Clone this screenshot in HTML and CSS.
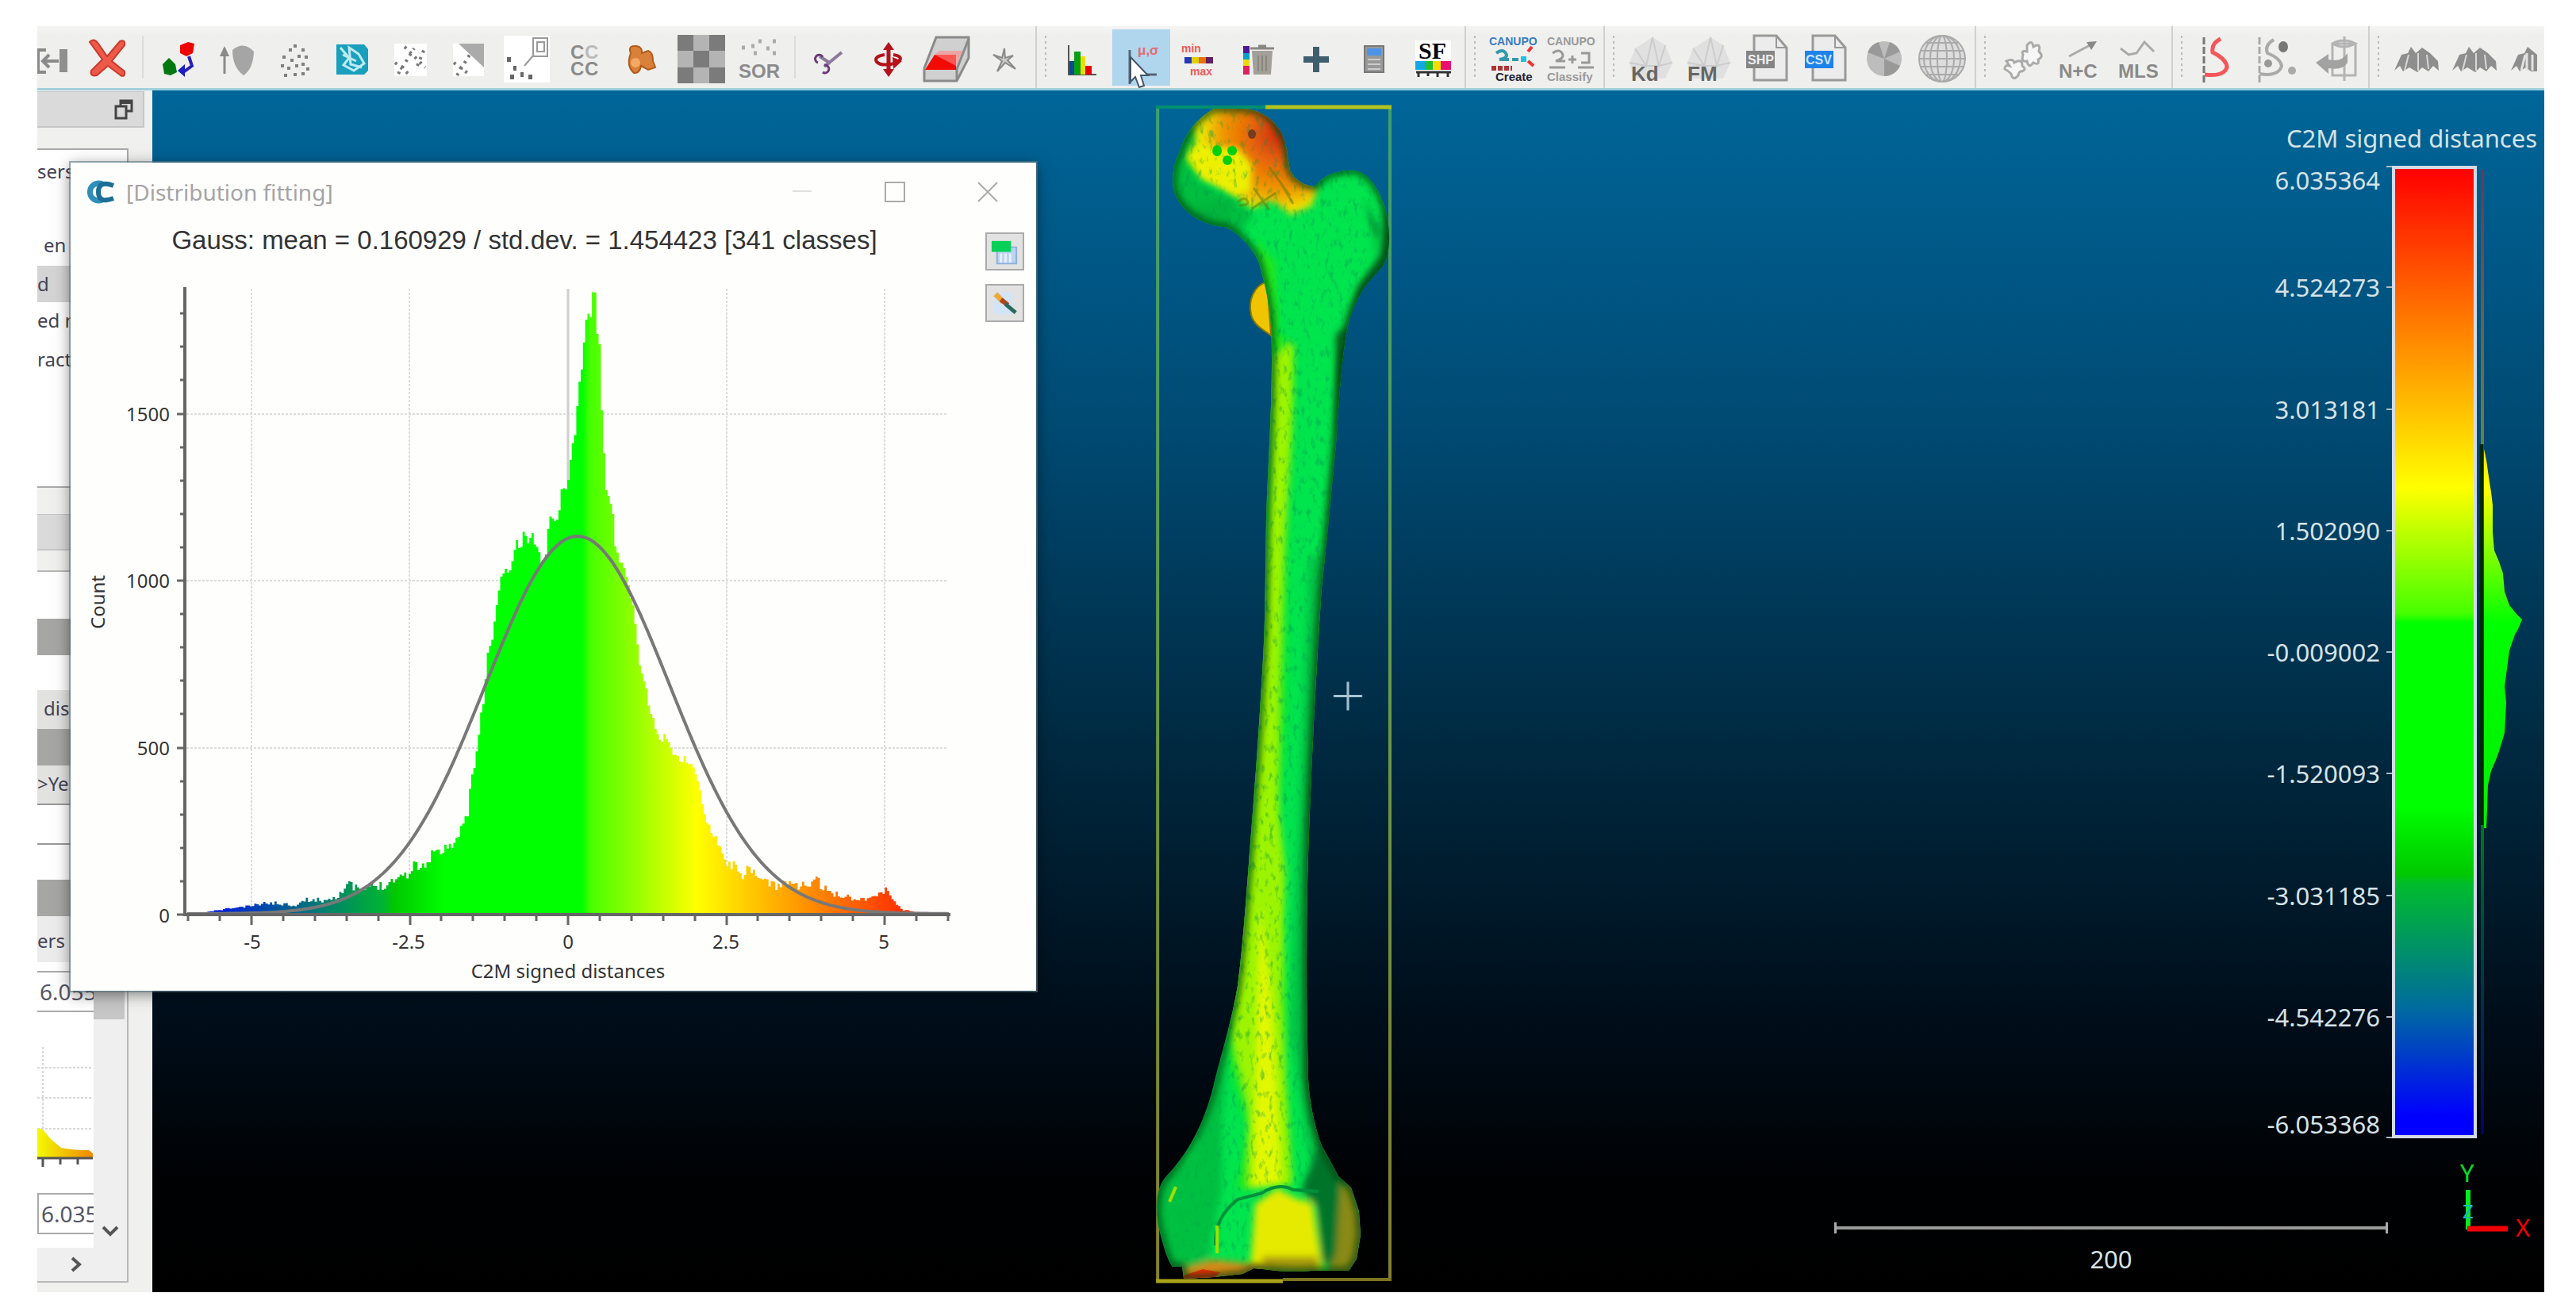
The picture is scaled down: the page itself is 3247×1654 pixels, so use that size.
FILE: index.html
```
<!DOCTYPE html>
<html lang="en">
<head>
<meta charset="utf-8">
<title>Distribution fitting</title>
<link rel="stylesheet" href="styles.css">
</head>
<body>
<main class="app">
  <nav class="toolbar" aria-label="Tools">
    <div class="group group-main">
      <button class="tool cut-left" aria-label="Merge"><svg viewBox="0 0 74 80"><path d="M34 30H24V58H34M30 44H50M38 36L30 44L38 52" fill="none" stroke="#8a8a8a" stroke-width="4"/><path d="M51 29H61V58H51Z" fill="#8f8f8f"/></svg></button>
      <button class="tool" aria-label="Delete"><svg viewBox="0 0 74 80"><path d="M15 20Q20 14 26 22L37 38L53 19Q60 16 59 24L43 44L59 57Q60 65 54 62L38 50L24 62Q15 64 17 56L31 42Z" fill="#ee5a47" stroke="#c93a2e" stroke-width="2"/></svg></button>
      <span class="sep"></span>
      <button class="tool" aria-label="Register"><svg viewBox="0 0 74 80"><path d="M40 24L50 20L58 22L56 34L48 38L40 34Z" fill="#f00000"/><path d="M51 38L55 50L44 58" fill="none" stroke="#2a20b8" stroke-width="4"/><path d="M46 48V64L37 56Z" fill="#1c1cc8"/><path d="M18 48L26 40L34 48L36 58L28 62L20 60Z" fill="#007a10"/></svg></button>
      <button class="tool" aria-label="Normals"><svg viewBox="0 0 74 80"><path d="M22 60V28" stroke="#8a8a8a" stroke-width="3"/><path d="M16 38L22 25L28 38Z" fill="#8a8a8a"/><path d="M32 30Q46 18 59 32Q58 54 46 62Q32 52 32 30Z" fill="#a5a5a5"/></svg></button>
      <button class="tool" aria-label="Sample"><svg viewBox="0 0 74 80"><path d="M22 37h4v4h-4zM30 28h4v4h-4zM36 23h4v4h-4zM46 28h4v4h-4zM50 37h4v4h-4zM41 36h4v4h-4zM32 41h4v4h-4zM20 48h4v4h-4zM28 51h4v4h-4zM38 48h4v4h-4zM46 46h4v4h-4zM52 52h4v4h-4zM24 60h4v4h-4zM36 59h4v4h-4zM46 58h4v4h-4z" fill="#808080"/></svg></button>
      <button class="tool" aria-label="Compute distances"><svg viewBox="0 0 74 80"><path d="M17 23H52L57 29V56L52 61H17Z" fill="#1a9fbd"/><path d="M22 27L33 40L26 49L39 56L52 47L45 35L33 27L35 48L49 52M25 36L42 44" fill="none" stroke="#bdeaf4" stroke-width="3"/></svg></button>
      <button class="tool" aria-label="Cloud to cloud"><svg viewBox="0 0 74 80"><path d="M17 22H58V63H17Z" fill="#fff"/><path d="M18 46L36 61M22 60L42 28M30 26L56 52M46 50L56 26" stroke="#777" stroke-width="4" stroke-dasharray="3 6"/></svg></button>
      <button class="tool" aria-label="Cloud to mesh"><svg viewBox="0 0 74 80"><path d="M17 22H56V63H17Z" fill="#fff"/><path d="M24 22H56V52Z" fill="#aaa"/><path d="M18 46L38 61M22 62L38 36" stroke="#777" stroke-width="4" stroke-dasharray="3 6"/></svg></button>
      <button class="tool" aria-label="Closest point"><svg viewBox="0 0 74 80"><path d="M8 12H66V71H8Z" fill="#fff"/><path d="M45 15H63V38H45ZM50 20H59V32H50ZM34 50L46 36" fill="none" stroke="#999" stroke-width="2"/><path d="M12 39h5v6h-5zM20 50h4v6h-4zM16 61h5v6h-5zM29 58h4v6h-4zM39 61h5v6h-5z" fill="#666"/></svg></button>
      <button class="tool" aria-label="Label components"><svg viewBox="0 0 74 80"><g class="glyph" fill="#8b8b8b" font-size="24"><text x="19" y="41">C</text><text x="37" y="41" fill="#bbb">C</text><text x="19" y="62">C</text><text x="37" y="62">C</text></g></svg></button>
      <button class="tool" aria-label="Segment blob"><svg viewBox="0 0 74 80"><path d="M22 34Q18 24 29 25Q37 26 36 34L44 31Q50 33 50 44L53 52L44 55Q39 52 35 50Q33 60 26 59Q16 50 22 34Z" fill="#d9803a" stroke="#b35a1c" stroke-width="2"/><circle cx="28" cy="46" r="6" fill="#f3a863"/></svg></button>
      <button class="tool" aria-label="Checkerboard"><svg viewBox="0 0 74 80"><path d="M7 11H67V72H7Z" fill="#b4b4b4"/><path d="M7 11H27V31H7ZM47 11H67V31H47ZM27 31H47V52H27ZM7 52H27V72H7ZM47 52H67V72H47Z" fill="#7b7b7b"/></svg></button>
      <button class="tool" aria-label="Outlier removal"><svg viewBox="0 0 74 80"><text class="glyph" x="11" y="65" font-size="24" fill="#8b8b8b">SOR</text><path d="M15 27h4M27 25h4M36 19h4M46 28h4M54 19h4M30 34h4M54 34h4" stroke="#aaa" stroke-width="5"/></svg></button>
      <span class="sep"></span>
      <button class="tool" aria-label="Cut"><svg viewBox="0 0 74 80"><path d="M52 33L30 51M24 38L38 47" stroke="#8b7a9a" stroke-width="4"/><path d="M22 46a5 5 0 1 1 6-7M28 58a5 5 0 1 0 2-9" fill="none" stroke="#6b3a78" stroke-width="3"/></svg></button>
      <button class="tool" aria-label="Translate and rotate"><svg viewBox="0 0 74 80"><path d="M37 26V58" stroke="#b5121b" stroke-width="5"/><path d="M30 30L37 20L44 30ZM30 54L37 64L44 54Z" fill="#b5121b"/><path d="M32 36Q18 38 22 45Q28 51 44 47M43 36Q56 38 50 44" fill="none" stroke="#b5121b" stroke-width="4"/><path d="M42 39L54 44L43 54Z" fill="#b5121b"/></svg></button>
      <button class="tool" aria-label="Cross section"><svg viewBox="0 0 74 80"><path d="M9 53L24 14H65V40L50 69H9Z" fill="#d0d0d0" stroke="#8a8a8a" stroke-width="3"/><path d="M50 69V54L65 16" fill="none" stroke="#8a8a8a" stroke-width="3"/><path d="M10 55L22 36H49V55Z" fill="#f20a05"/><path d="M22 36L28 31H58L49 50Z" fill="#f88" opacity=".6"/></svg></button>
      <button class="tool" aria-label="Trace polyline"><svg viewBox="0 0 74 80"><path d="M37 28L34 40L23 36L34 44L28 57L38 46L51 54L41 43L48 37L38 40Z" fill="#ccc" stroke="#8a8a8a" stroke-width="2"/></svg></button>
    </div>
    <div class="group"><span class="grip"></span>
      <button class="tool" aria-label="Histogram"><svg viewBox="0 0 74 80"><path d="M19 24V61H54" fill="none" stroke="#555" stroke-width="2"/><path d="M20 44H26V61H20Z" fill="#0a4a90"/><path d="M26 32H34V61H26Z" fill="#06a015"/><path d="M34 38H40V61H34Z" fill="#e8e000"/><path d="M40 50H48V61H40Z" fill="#e80000"/></svg></button>
      <button class="tool active" aria-label="Fit distribution"><svg viewBox="0 0 74 80"><path d="M22 30V73M40 61H56" stroke="#567" stroke-width="3" fill="none"/><text class="glyph" x="32" y="36" font-size="17" fill="#e36a72">μ,σ</text><path d="M23 39V70L29 64L34 77L40 75L36 62H45Z" fill="#fff" stroke="#456" stroke-width="2"/></svg></button>
      <button class="tool" aria-label="Scalar range"><svg viewBox="0 0 74 80"><text class="glyph" x="14" y="33" font-size="14" fill="#ee5a5a">min</text><text class="glyph" x="25" y="62" font-size="14" fill="#ee5a5a">max</text><path d="M18 39h9v8h-9z" fill="#2538b8"/><path d="M27 39h9v8h-9z" fill="#e0d000"/><path d="M36 39h9v8h-9z" fill="#e87000"/><path d="M45 39h9v8h-9z" fill="#602060"/></svg></button>
      <button class="tool" aria-label="Delete scalar field"><svg viewBox="0 0 74 80"><path d="M18 25h8v9h-8z" fill="#50189a"/><path d="M18 34h8v8h-8z" fill="#08a0c8"/><path d="M18 42h8v8h-8z" fill="#eed800"/><path d="M18 50h8v11h-8z" fill="#e02060"/><path d="M29 31H55L53 61H31Z" fill="#a3a09a"/><path d="M27 28h30M37 25h10" stroke="#8a8782" stroke-width="3"/><path d="M37 37V57M42 37V57M47 37V57" stroke="#8a8782" stroke-width="2"/></svg></button>
      <button class="tool" aria-label="Add scalar field"><svg viewBox="0 0 74 80"><path d="M37 26V58M21 42H53" stroke="#3f5f6e" stroke-width="8"/></svg></button>
      <button class="tool" aria-label="Scalar calculator"><svg viewBox="0 0 74 80"><path d="M25 25H49V58H25Z" fill="#999" stroke="#777" stroke-width="2"/><path d="M28 28H46V37H28Z" fill="#4d94e8"/><path d="M29 42h16M29 48h16M29 54h16" stroke="#ccc" stroke-width="2"/></svg></button>
      <button class="tool" aria-label="Scalar field as coordinate"><svg viewBox="0 0 74 80"><path d="M15 18H60V64H15Z" fill="#fff"/><text class="glyph-serif" x="19" y="41" font-size="30">SF</text><path d="M15 44h12v11H15z" fill="#10a8e0"/><path d="M27 44h10v11H27z" fill="#20c030"/><path d="M37 44h10v11H37z" fill="#f4dc00"/><path d="M47 44h13v11H47z" fill="#e81070"/><path d="M16 58H60M19 58v6M31 58v5M43 58v6M56 58v6" stroke="#333" stroke-width="3"/></svg></button>
    </div>
    <div class="group"><span class="grip"></span>
      <button class="tool" aria-label="Canupo create"><svg viewBox="0 0 74 80"><text class="glyph" x="7" y="24" font-size="14" fill="#3a7cc4">CANUPO</text><path d="M16 34q8-6 12 0t-8 8h12M36 42h8" fill="none" stroke="#39a" stroke-width="4"/><path d="M47 38h7v7h-7z" fill="#1cc0e0"/><path d="M56 32l5-6M56 44l7 6" stroke="#e33" stroke-width="4"/><path d="M10 53h26" stroke="#a33" stroke-width="6" stroke-dasharray="6 2"/><text class="glyph" x="15" y="69" font-size="15" fill="#223">Create</text></svg></button>
      <button class="tool" aria-label="Canupo classify"><svg viewBox="0 0 74 80"><g fill="#999"><text class="glyph" x="7" y="24" font-size="14">CANUPO</text><text class="glyph" x="7" y="69" font-size="15">Classify</text></g><path d="M14 34q8-6 12 0t-8 10h12M10 52h20M34 42h10M39 37v10M50 34h10v12H50M46 52h20" fill="none" stroke="#999" stroke-width="3"/></svg></button>
    </div>
    <div class="group"><span class="grip"></span>
      <button class="tool" aria-label="Kd-tree facets"><svg viewBox="0 0 74 80"><path d="M9 46L16 28L38 14L54 24L63 46L54 66H14Z" fill="#e0e0e0"/><path d="M16 28L30 50L38 14L46 50L54 24M9 46L30 50L46 50L63 46" fill="none" stroke="#ccc" stroke-width="2"/><text class="glyph" x="11" y="69" font-size="26" fill="#666">Kd</text></svg></button>
      <button class="tool" aria-label="Fast marching facets"><svg viewBox="0 0 74 80"><path d="M9 46L16 28L38 14L54 24L63 46L54 66H14Z" fill="#e0e0e0"/><path d="M16 28L30 50L38 14L46 50L54 24M9 46L30 50L46 50L63 46" fill="none" stroke="#ccc" stroke-width="2"/><text class="glyph" x="9" y="69" font-size="26" fill="#666">FM</text></svg></button>
      <button class="tool" aria-label="Export SHP"><svg viewBox="0 0 74 80"><path d="M20 12H48L61 27V68H20Z" fill="#ececec" stroke="#999" stroke-width="3"/><path d="M48 12V27H61" fill="none" stroke="#999" stroke-width="2"/><path d="M10 31H46V53H10Z" fill="#858585"/><text class="glyph" x="12" y="48" font-size="16" fill="#eee">SHP</text></svg></button>
      <button class="tool" aria-label="Export CSV"><svg viewBox="0 0 74 80"><path d="M20 12H48L61 27V68H20Z" fill="#ececec" stroke="#999" stroke-width="3"/><path d="M48 12V27H61" fill="none" stroke="#999" stroke-width="2"/><path d="M10 31H46V53H10Z" fill="#1d83e8"/><text class="glyph" x="11" y="48" font-size="16" fill="#cfe6ff">CSV</text></svg></button>
      <button class="tool" aria-label="Classify facets"><svg viewBox="0 0 74 80"><circle cx="37" cy="41" r="22" fill="#bdbdbd"/><path d="M37 41L16 33A22 22 0 0 1 30 20ZM37 41V63A22 22 0 0 0 57 50ZM37 41L44 20A22 22 0 0 1 57 32Z" fill="#999"/></svg></button>
      <button class="tool" aria-label="Stereogram"><svg viewBox="0 0 74 80"><g fill="none" stroke="#aaa" stroke-width="2"><circle cx="37" cy="41" r="29" fill="#ddd"/><ellipse cx="37" cy="41" rx="23" ry="29"/><ellipse cx="37" cy="41" rx="15" ry="29"/><ellipse cx="37" cy="41" rx="6" ry="29"/><path d="M8 41H66M10 31H64M10 51H64M17 21H57M17 61H57"/></g></svg></button>
    </div>
    <div class="group"><span class="grip"></span>
      <button class="tool" aria-label="Puzzle"><svg viewBox="0 0 74 80"><path d="M42 24Q48 16 50 26Q60 20 57 32Q64 38 56 42Q58 50 50 46Q44 54 42 44Q34 46 37 36Q34 30 42 32ZM16 44Q24 40 26 46Q36 40 36 50Q42 54 36 57Q32 56 31 62Q24 70 22 60Q18 56 14 54Q14 48 20 50Z" fill="#f6f6f6" stroke="#aaa" stroke-width="3"/></svg></button>
      <button class="tool" aria-label="Normals and curvature"><svg viewBox="0 0 74 80"><text class="glyph" x="9" y="65" font-size="24" fill="#8a8a8a">N+C</text><path d="M22 38L52 22" stroke="#aaa" stroke-width="3"/><path d="M44 20L57 19L50 30Z" fill="#8a8a8a"/></svg></button>
      <button class="tool" aria-label="Moving least squares"><svg viewBox="0 0 74 80"><text class="glyph" x="11" y="65" font-size="24" fill="#8a8a8a">MLS</text><path d="M14 28L24 36L34 34L44 20L56 32" fill="none" stroke="#aaa" stroke-width="3"/></svg></button>
    </div>
    <div class="group"><span class="grip"></span>
      <button class="tool" aria-label="Extract profile"><svg viewBox="0 0 74 80"><path d="M17 14V71" stroke="#777" stroke-width="3" stroke-dasharray="9 3"/><path d="M38 16Q26 22 28 33Q46 42 46 52Q42 64 18 61" fill="none" stroke="#f4575a" stroke-width="5"/></svg></button>
      <button class="tool" aria-label="Distance to profile"><svg viewBox="0 0 74 80"><path d="M14 14V71" stroke="#aaa" stroke-width="3" stroke-dasharray="9 3"/><path d="M32 17Q20 24 24 34Q40 40 42 50Q38 64 14 60" fill="none" stroke="#aaa" stroke-width="4"/><ellipse cx="44" cy="26" rx="6" ry="7" fill="#777"/><circle cx="25" cy="47" r="5" fill="#999"/><circle cx="55" cy="56" r="5" fill="#aaa"/></svg></button>
      <button class="tool" aria-label="Unroll"><svg viewBox="0 0 74 80"><path d="M33 22H62V62H33ZM33 22Q47 14 62 22Q47 30 33 22M48 13V69" fill="none" stroke="#b4b4b4" stroke-width="3"/><path d="M12 46L28 35V42Q44 46 52 34V46Q46 56 28 53V60Z" fill="#a2a2a2"/></svg></button>
    </div>
    <div class="group group-last"><span class="grip"></span>
      <button class="tool" aria-label="Waveform"><svg viewBox="0 0 74 80"><path d="M9 56L18 36L26 34L30 26L36 34L44 27L54 34L64 44L65 56L58 50L52 57L44 52L38 58L28 52L20 57L16 50Z" fill="#8e8e8e"/><path d="M22 56L27 36M39 56V34M52 54L50 36" stroke="#d8d8d8" stroke-width="2"/></svg></button>
      <button class="tool" aria-label="Waveform region"><svg viewBox="0 0 74 80"><path d="M9 56L18 36L26 34L30 26L36 34L44 27L54 34L64 44L65 56L58 50L52 57L44 52L38 58L28 52L20 57L16 50Z" fill="#8e8e8e"/><path d="M22 56L27 36M39 56V34M52 54L50 36" stroke="#d8d8d8" stroke-width="2"/></svg></button>
      <button class="tool cut-right" aria-label="Waveform slice"><svg viewBox="0 0 74 80"><path d="M9 56L18 36L26 34L30 26L42 36V57H34L28 52L20 57L16 50Z" fill="#8e8e8e"/><path d="M22 56L27 36M29 56V34M36 56V36" stroke="#e2e2e2" stroke-width="3"/></svg></button>
    </div>
  </nav>

  <div class="workspace">
    <aside class="side">
      <header class="side-head"><svg viewBox="0 0 24 26"><path d="M8 8V2H22V15H16M2 9H15V24H2Z" fill="none" stroke="#444" stroke-width="3"/><path d="M8 2H22V6H8Z" fill="#444"/></svg></header>
      <div class="tree">
        <p class="tree-row row-first">sers</p>
        <p class="tree-row in">en</p>
        <p class="tree-row picked">d</p>
        <p class="tree-row">ed n</p>
        <p class="tree-row">ract</p>
      </div>
      <div class="side-head second"></div>
      <div class="props">
        <div class="props-body">
          <div class="cell tall"></div>
          <div class="cell dark"></div>
          <div class="cell"></div>
          <div class="cell light in">dis</div>
          <div class="cell dark"></div>
          <div class="cell light lined">&gt;Ye</div>
          <div class="cell lined"></div>
          <div class="cell"></div>
          <div class="cell dark"></div>
          <div class="cell light wide">ers</div>
          <input class="num" aria-label="Minimum" value="6.055368">
          <svg class="mini" viewBox="47 1276 71 228"><path d="M47 1346H117M47 1384H117M47 1423H117M54 1320V1460" stroke="#d8d8d8" stroke-width="2" stroke-dasharray="3 2"/><path d="M47 1422L54 1424L64 1436L77 1447L90 1449L102 1450L112 1450L117 1454V1460H47Z" fill="url(#miniRamp)"/><path d="M47 1460H117M54 1460V1471M76 1460V1468M98 1460V1468" stroke="#555" stroke-width="3"/><defs><linearGradient id="miniRamp"><stop offset="0" stop-color="#f4fa00"/><stop offset="1" stop-color="#f08800"/></linearGradient></defs></svg>
          <input class="num num-left" aria-label="Maximum" value="6.035364">
        </div>
        <div class="vbar"><i></i><svg viewBox="0 0 22 14"><path d="M2 2L11 11L20 2" fill="none" stroke="#555" stroke-width="4"/></svg></div>
        <div class="hbar"><svg viewBox="0 0 14 20"><path d="M2 2L11 10L2 18" fill="none" stroke="#555" stroke-width="4"/></svg></div>
      </div>
    </aside>

    <section class="view" aria-label="3D view">
      <svg class="scene" viewBox="192 113 3015 1516">
        <defs>
          <linearGradient id="boxSide" x1="0" y1="134" x2="0" y2="1614" gradientUnits="userSpaceOnUse"><stop offset="0" stop-color="#3fa06e"/><stop offset=".5" stop-color="#6a9a48"/><stop offset="1" stop-color="#85802c"/></linearGradient>
          <radialGradient id="head" cx="1612" cy="168" r="120" gradientUnits="userSpaceOnUse"><stop offset="0" stop-color="#d02a08"/><stop offset=".3" stop-color="#e86408"/><stop offset=".6" stop-color="#f09800"/><stop offset=".85" stop-color="#eef000"/><stop offset="1" stop-color="#8ae800"/></radialGradient>
          <clipPath id="boneClip"><path id="bone" d="M1530 136C1508 148 1492 170 1487 190C1476 210 1475 236 1484 250C1494 270 1520 284 1543 285C1560 290 1582 316 1587 331C1594 356 1600 380 1602 410C1605 470 1600 560 1597 620C1594 690 1596 760 1592 828C1588 900 1584 960 1578 1035C1572 1110 1568 1180 1560 1242C1552 1290 1536 1340 1530 1367C1517 1420 1496 1455 1470 1483C1455 1500 1456 1530 1461 1550C1466 1570 1472 1590 1478 1597L1490 1597L1492 1612L1530 1610L1566 1606L1580 1599C1600 1600 1615 1605 1653 1602L1700 1602L1710 1587L1715 1557L1713 1527L1703 1497L1687 1483C1676 1462 1668 1448 1667 1447C1656 1418 1650 1385 1649 1360C1646 1240 1646 1120 1652 1000C1656 900 1662 800 1666 740C1672 690 1680 600 1684 560C1688 500 1692 440 1700 406C1706 385 1715 370 1717 366C1730 346 1744 338 1748 324C1754 300 1750 282 1748 270C1742 240 1725 216 1708 214C1690 213 1668 218 1658 234C1645 234 1632 226 1626 214C1622 190 1622 178 1613 163C1600 142 1580 136 1562 136Z"/></clipPath>
          <filter id="grain" x="0" y="0" width="1" height="1"><feTurbulence type="fractalNoise" baseFrequency=".17 .08" numOctaves="3" seed="7"/><feColorMatrix values="0 0 0 0 0  0 0 0 0 .3  0 0 0 0 .08  4 0 0 0 -2.2"/></filter>
          <filter id="soft"><feGaussianBlur stdDeviation="4"/></filter>
        </defs>
        <path d="M1459 134V1614M1752 134V1614" stroke="url(#boxSide)" stroke-width="4"/>
        <path d="M1457 134H1595" stroke="#009070" stroke-width="4"/><path d="M1595 134H1754" stroke="#b4c41c" stroke-width="5"/>
        <path d="M1457 1615H1617" stroke="#aaa41a" stroke-width="5"/><path d="M1617 1613H1754" stroke="#7c7420" stroke-width="4"/>
        <path d="M1597 354C1580 360 1573 378 1577 396C1580 408 1590 414 1602 422Z" fill="#f0c400" stroke="#8a7a00" stroke-width="2"/>
        <g clip-path="url(#boneClip)">
          <rect x="1450" y="130" width="310" height="1490" fill="#00e44e"/>
          <g filter="url(#soft)">
            <path d="M1583 300L1607 330L1612 420L1632 436L1630 520L1622 700L1620 900L1612 1040L1622 1240L1622 1360L1630 1490L1560 1500L1572 1420L1550 1340L1546 1280L1575 1040L1590 800L1600 600L1598 440Z" fill="#20e81c"/>
            <path d="M1606 450L1630 430L1628 540L1618 680L1612 860L1610 1000L1620 1100L1614 1260L1622 1400L1628 1494L1573 1498L1575 1400L1554 1310L1560 1240L1580 1040L1596 760Z" fill="#9cf400"/>
            <path d="M1588 1140L1602 1260L1610 1400L1614 1490L1580 1498L1582 1400Z" fill="#e2f800"/>
            <path d="M1668 700L1650 700L1636 1040L1626 1300L1650 1460L1690 1500L1670 1360Z" fill="#00c245"/>
            <path d="M1684 420L1684 560L1666 760L1650 1000L1646 1360L1662 1440L1700 1510L1660 1180L1700 560L1720 400Z" fill="#00601f"/>
            <path d="M1748 250L1740 320L1712 360L1690 440L1730 440L1770 340Z" fill="#007228"/>
            <path d="M1720 250L1734 300L1730 330L1738 290Z" fill="#006a20"/>
            <path d="M1470 480L1555 250L1490 260Z" fill="#00b040"/>
          </g>
          <g filter="url(#soft)"><path d="M1496 180Q1500 120 1560 126L1620 120L1628 214L1660 236L1654 258L1628 270L1604 252L1576 262L1552 240L1516 222L1492 204Z" fill="url(#head)"/></g>
          <path d="M1494 194L1508 184L1560 186L1578 206L1576 240L1556 246L1532 232L1514 224Z" fill="#ecf000" filter="url(#soft)"/>
          <path d="M1476 180L1500 150L1508 176L1492 196L1512 228L1558 252L1580 270L1560 296L1480 276Z" fill="#00b83c" opacity=".85" filter="url(#soft)"/>
          <rect x="1450" y="130" width="310" height="1490" filter="url(#grain)" opacity=".42"/>
          <g fill="#00d010"><ellipse cx="1534" cy="189" rx="6" ry="7"/><ellipse cx="1553" cy="189" rx="6" ry="6"/><ellipse cx="1547" cy="201" rx="6" ry="6"/></g>
          <g filter="url(#soft)">
            <path d="M1450 1490L1500 1460L1530 1370L1550 1300L1540 1410L1540 1500L1520 1600L1470 1610Z" fill="#00b03c" opacity=".7"/>
            <path d="M1664 1440L1690 1480L1684 1600L1666 1590L1660 1520L1640 1500Z" fill="#00742c"/>
            <path d="M1582 1518L1610 1498L1636 1512L1654 1516L1662 1570L1668 1604L1600 1606L1576 1596Z" fill="#e6ea00"/>
            <path d="M1690 1490L1706 1496L1722 1550L1710 1610L1672 1606L1684 1580Z" fill="#8a8a14"/>
            <path d="M1590 1584L1660 1584L1664 1606H1596Z" fill="#a89a08"/>
            <path d="M1490 1600L1530 1588L1600 1596L1580 1612L1490 1618Z" fill="#d88a18"/>
          </g>
          <path d="M1492 1608L1516 1600L1538 1604L1528 1614H1492Z" fill="#f02c08"/>
          <path d="M1532 1570Q1530 1535 1560 1512L1590 1504Q1612 1490 1630 1500L1662 1502" fill="none" stroke="#00903a" stroke-width="4"/>
          <path d="M1534 1545V1580M1474 1515L1482 1496" stroke="#a4e000" stroke-width="4"/>
          <path d="M1560 254q8-8 12-2t-10 6M1578 262l30-20M1580 236l20 28M1612 226l18 30M1600 210l26 36" fill="none" stroke="#5e7a00" stroke-width="3" opacity=".5"/>
          <ellipse cx="1578" cy="168" rx="5" ry="6" fill="#7a3a20"/>
          <use href="#bone" fill="none" stroke="#003a10" stroke-width="9" opacity=".75" filter="url(#soft)"/>
        </g>
        <path d="M1681 877H1717M1699 859V895" stroke="#a9c6d4" stroke-width="3"/>
      </svg>

      <div class="legend">
        <h2>C2M signed distances</h2>
        <div class="legend-body">
          <ol class="ticks"><li>6.035364</li><li>4.524273</li><li>3.013181</li><li>1.502090</li><li>-0.009002</li><li>-1.520093</li><li>-3.031185</li><li>-4.542276</li><li>-6.053368</li></ol>
          <div class="ramp"></div>
          <svg class="density" viewBox="3122 209 58 1226"><defs><linearGradient id="vramp" x1="0" y1="212" x2="0" y2="1432" gradientUnits="userSpaceOnUse"><stop offset="0" stop-color="#f00"/><stop offset=".33" stop-color="#ff0"/><stop offset=".47" stop-color="#0f0"/><stop offset=".7" stop-color="#0e0"/><stop offset=".75" stop-color="#00b432"/><stop offset="1" stop-color="#00f"/></linearGradient></defs>
            <path d="M3129 214V1430" stroke="url(#vramp)" stroke-width="4" opacity=".4"/><path d="M3128 560V1040" stroke="#02280c" stroke-width="5"/>
            <path d="M3131 566L3134 580L3138 608L3140 620L3142 637L3142 671L3144 694L3150 708L3155 723L3157 746L3163 763L3172 774L3179 781L3174 793L3170 800L3163 820L3160 843L3157 866L3159 885L3158 905L3157 924L3150 947L3146 958L3140 972L3136 990L3135 1020L3134 1044H3131Z" fill="url(#vramp)"/></svg>
        </div>
        <div class="legend-foot">
          <div class="scale"><span class="scale-line"></span><span>200</span></div>
          <svg class="triad" viewBox="3090 1454 108 120"><g class="axis-text" font-size="31"><text x="3101" y="1490" fill="#00e020">Y</text><text x="3171" y="1559" fill="#f00000">X</text></g><path d="M3111 1500V1550" stroke="#00ee20" stroke-width="6"/><path d="M3110 1549H3161" stroke="#ee0000" stroke-width="7"/><text class="axis-text" x="3104" y="1536" font-size="24" fill="#16b6c8">Z</text></svg>
        </div>
      </div>
    </section>
  </div>

  <section class="dialog" role="dialog" aria-label="Distribution fitting">
    <header class="titlebar">
      <svg class="logo" viewBox="0 0 38 34"><path d="M21 7A11 11 0 1 0 21 27" fill="none" stroke="#2f8fb8" stroke-width="7"/><path d="M35 9Q16 2 16 17T35 25" fill="none" stroke="#1b6f96" stroke-width="6"/></svg>
      <h1>[Distribution fitting]</h1>
      <button class="win" aria-label="Minimize"><svg viewBox="0 0 28 28"><path d="M2 13H26" stroke="#e0e0e0" stroke-width="2"/></svg></button>
      <button class="win" aria-label="Maximize"><svg viewBox="0 0 28 28"><path d="M2 2H26V26H2Z" fill="none" stroke="#aaa" stroke-width="2"/></svg></button>
      <button class="win" aria-label="Close"><svg viewBox="0 0 28 28"><path d="M2 2L26 26M26 2L2 26" stroke="#aaa" stroke-width="2"/></svg></button>
    </header>
    <div class="dialog-body">
      <div class="plot">
        <h2>Gauss: mean = 0.160929 / std.dev. = 1.454423 [341 classes]</h2>
        <svg viewBox="89 325 1136 924">
          <defs><linearGradient id="ramp" x1="232" y1="0" x2="1197" y2="0" gradientUnits="userSpaceOnUse"><stop offset="0" stop-color="#00f"/><stop offset=".26" stop-color="#00b432"/><stop offset=".275" stop-color="#00c800"/><stop offset=".34" stop-color="#0f0"/><stop offset=".52" stop-color="#0f0"/><stop offset=".53" stop-color="#46ff00"/><stop offset=".67" stop-color="#ff0"/><stop offset="1" stop-color="#f00"/></linearGradient></defs>
          <path d="M317 364V1150M516 364V1150M916 364V1150M1115 364V1150M235 522H1195M235 732H1195M235 943H1195" stroke="#dcdcdc" stroke-width="2" stroke-dasharray="3 2"/>
          <path d="M716 364V1150" stroke="#cfcfcf" stroke-width="3"/>
          <path id="bars" fill="url(#ramp)"/>
          <path id="curve" fill="none" stroke="#787878" stroke-width="4"/>
          <path d="M233 362V1153H1198" fill="none" stroke="#666" stroke-width="4"/>
          <path id="axis-ticks" stroke="#666" stroke-width="3"/>
          <g class="plot-text">
            <g text-anchor="end"><text x="214" y="531">1500</text><text x="214" y="741">1000</text><text x="214" y="952">500</text><text x="214" y="1163">0</text></g>
            <g text-anchor="middle"><text x="318" y="1196">-5</text><text x="515" y="1196">-2.5</text><text x="716" y="1196">0</text><text x="915" y="1196">2.5</text><text x="1114" y="1196">5</text><text x="716" y="1233">C2M signed distances</text><text transform="translate(132 759) rotate(-90)">Count</text></g>
          </g>
        </svg>
      </div>
      <div class="plot-tools">
        <button aria-label="Export to CSV"><svg viewBox="0 0 44 44"><path d="M12 16H37V37H12Z" fill="#bcd4f0" stroke="#8fb0d8" stroke-width="2"/><path d="M17 24V36M23 24V36M29 24V36" stroke="#e6effa" stroke-width="3"/><path d="M5 8H30V22H5Z" fill="#08cf58"/></svg></button>
        <button aria-label="Export to image"><svg viewBox="0 0 44 44"><path d="M8 8H32V36H8Z" fill="#d3e4f6"/><path d="M10 10L20 20" stroke="#f0a838" stroke-width="7"/><path d="M17 17L26 24" stroke="#a84820" stroke-width="6"/><path d="M23 23L36 34" stroke="#2a6a5a" stroke-width="5"/></svg></button>
      </div>
    </div>
  </section>
</main>
<script src="chart.js"></script>
</body>
</html>
```

FILE: styles.css
```
* { box-sizing: border-box; }
html, body { margin: 0; background: #fff; }
body { min-height: 100vh; display: flex; flex-direction: column; padding: 33px 40px 25px 47px; font-family: "Noto Sans", "Open Sans", sans-serif; }
h1, h2, p, ol { margin: 0; padding: 0; font-size: inherit; font-weight: 400; list-style: none; }
button { border: 0; padding: 0; background: none; font: inherit; }
svg { display: block; }

.app { position: relative; flex: 1; display: flex; flex-direction: column; overflow: hidden; background: #f0f0ef; }

/* toolbar */
.toolbar { display: flex; height: 81px; border-bottom: 3px solid #9fd0dc; background: linear-gradient(#f4f4f3, #efefed 12px); }
.group { display: flex; align-items: stretch; flex: 3 1 28px; min-width: 0; border-left: 2px solid #d0d0d0; padding: 0 4px 0 10px; }
.group:nth-child(2) { flex-grow: 7; }
.group:nth-child(3) { flex-grow: 2; }
.group:nth-child(4) { flex-grow: 6; }
.group-main { flex: 16.7 1 33px; border-left: 0; padding: 0 2px 0 0; }
.group-last { flex: 2.7 1 24px; padding-right: 0; }
.grip { flex: none; width: 2px; margin: 12px 10px 10px 0; background: repeating-linear-gradient(#bbb 0 3px, transparent 3px 7px); }
.sep { flex: none; width: 2px; margin: 12px 7px; background: #dcdcdc; }
.tool { flex: 1 1 0; min-width: 0; display: flex; justify-content: center; overflow: hidden; }
.tool svg { flex: none; width: 74px; height: 80px; }
.cut-left { flex-grow: .7; justify-content: flex-end; }
.cut-right { flex-grow: .7; justify-content: flex-start; }
.active { background: linear-gradient(transparent 4px, #b0d6ee 4px 75px, transparent 75px); }
.glyph { font-family: "Liberation Sans", sans-serif; font-weight: 700; }
.glyph-serif { font-family: "Liberation Serif", serif; font-weight: 700; }

.workspace { flex: 1; display: grid; grid-template-columns: 145px 1fr; }

/* left panel */
.side { display: flex; flex-direction: column; min-width: 0; padding: 1px 0 12px; overflow: hidden; font-size: 28px; color: #445; }
.side-head { flex: none; display: flex; justify-content: flex-end; align-items: center; width: 135px; height: 46px; padding-right: 12px; background: #dadada; border: solid #c6c6c6; border-width: 1px 2px 2px 0; }
.side-head svg { width: 24px; height: 26px; }
.tree { width: 115px; height: 428px; margin-top: 26px; padding-top: 4px; background: #fff; border: solid #aaa; border-width: 2px 2px 2px 0; overflow: hidden; font-size: 24px; }
.tree-row { height: 49px; line-height: 46px; white-space: nowrap; }
.tree-row.row-first { height: 93px; }
.tree-row.in, .cell.in { padding-left: 8px; }
.tree-row.picked { height: 46px; background: #d4d4d4; }
.second { margin-top: 33px; }
.props { flex: 1; width: 115px; margin-top: 25px; display: grid; grid-template: 1fr 42px / 71px 1fr; border: solid #b8b8b8; border-width: 2px 2px 2px 0; min-height: 0; overflow: hidden; }
.props-body { display: flex; flex-direction: column; background: #fff; overflow: hidden; }
.cell { flex: none; height: 44px; line-height: 46px; white-space: nowrap; font-size: 24px; }
.cell.tall { height: 59px; }
.cell.dark { height: 46px; background: #a6a6a5; }
.cell.light { height: 49px; background: #e2e2e1; }
.cell.lined { height: 50px; border-bottom: 2px solid #999; }
.cell.wide { height: 58px; line-height: 62px; background: #ececec; margin-bottom: 11px; }
.num { flex: none; width: 150px; height: 52px; border: solid #aaa; border-width: 2px 0; padding: 0 3px; font: inherit; color: #556; background: #fff; }
.num-left { border-left-width: 2px; }
.mini { flex: none; width: 71px; height: 228px; }
.vbar { display: flex; flex-direction: column; align-items: center; justify-content: space-between; padding-bottom: 14px; background: #efefef; }
.vbar i { align-self: stretch; height: 564px; background: #c6c6c6; margin-right: 3px; }
.vbar svg { width: 22px; height: 14px; }
.hbar { grid-column: 1 / 3; display: flex; align-items: center; padding-left: 42px; background: #efefef; }
.hbar svg { width: 14px; height: 20px; }

/* 3D view */
.view { position: relative; display: flex; justify-content: flex-end; color: #d6e2e8; font-size: 31px; line-height: 36px; background: linear-gradient(#006699, #004a73 28%, #003f62 37%, #00253a 58%, #000f1c 76%, #000103 91%, #000); }
.scene { position: absolute; inset: 0; width: 100%; height: 100%; }
.legend { position: relative; display: flex; flex-direction: column; align-items: flex-end; padding: 42px 9px 55px 0; }
.legend-body { flex: 1; display: flex; margin: 17px 18px 0 0; }
.ticks { display: grid; grid-template-rows: 1fr repeat(7, 2fr) 1fr; }
.ticks li { display: flex; align-items: center; justify-content: flex-end; gap: 8px; }
.ticks li::after { content: ""; width: 7px; height: 2px; background: #a9bcc6; }
.ticks li:first-child { align-items: flex-start; }
.ticks li:last-child { align-items: flex-end; }
.ramp { width: 107px; border: 4px solid #d3dbe6; background: linear-gradient(#f00, #ff0 33%, #46ff00 46%, #0f0 47% 66%, #00c800 73%, #00bc2c 74%, #006aa0 87%, #00f 98%); }
.density { width: 58px; }
.legend-foot { display: flex; align-items: flex-start; margin-top: 19px; height: 120px; }
.scale { display: flex; flex-direction: column; align-items: center; gap: 14px; width: 698px; margin: 87px 80px 0 0; }
.scale-line { align-self: stretch; height: 14px; border: solid #aaa; border-width: 0 3px; background: linear-gradient(transparent 5px, #9a9a9a 5px 9px, transparent 9px); }
.triad { width: 108px; height: 120px; }
.axis-text { font-family: "Noto Sans", sans-serif; }

/* floating dialog */
.dialog { position: absolute; left: 42px; top: 172px; width: 1217px; background: #fefefd; box-shadow: 0 0 0 2px rgba(90, 120, 130, .6), 0 4px 18px rgba(0, 0, 0, .5); }
.titlebar { display: flex; align-items: center; height: 74px; padding: 0 47px 0 19px; color: #a4a4a4; }
.titlebar h1 { flex: 1; margin-left: 13px; font-size: 28px; }
.logo { width: 38px; height: 34px; }
.win { margin-left: 89px; }
.win svg { width: 28px; height: 28px; }
.dialog-body { display: flex; }
.plot { flex: 1; }
.plot h2 { height: 46px; padding-left: 8px; text-align: center; font: 33px/48px "Liberation Sans", Arial, sans-serif; color: #333; }
.plot svg { width: 100%; }
.plot-text { font-size: 24px; fill: #333; }
.plot-tools { flex: none; display: flex; flex-direction: column; gap: 17px; width: 81px; padding: 14px 15px 0 17px; }
.plot-tools button { height: 48px; padding: 0 1px; border: 2px solid #aaa; background: #e2e2e2; }
```

FILE: chart.js
```
// Envelope of the 341-class histogram, as x,y pairs in plot units.
const envelope = [236,1152,252,1151,270,1148,290,1145,310,1143,337,1138,360,1140,370,1141,387,1134,405,1135,421,1131,438,1116,448,1120,459,1122,470,1116,480,1117,497,1107,515,1101,519,1090,530,1092,539,1088,543,1072,552,1076,560,1068,577,1061,581,1041,589,1024,592,985,594,974,599,952,604,909,610,874,612,831,619,809,623,774,627,752,631,724,640,720,647,701,648,682,656,691,660,668,665,689,670,672,676,692,681,709,688,694,691,652,698,660,705,637,706,616,714,617,718,576,723,555,725,519,731,473,735,430,736,402,743,401,745,362,749,364,752,430,756,442,757,512,760,569,763,612,767,626,772,655,774,687,782,709,787,726,791,731,800,788,806,841,815,877,821,906,829,931,842,931,850,956,867,959,875,973,884,1013,892,1038,905,1063,916,1090,930,1093,934,1104,940,1097,955,1106,976,1118,985,1112,1005,1116,1023,1116,1029,1108,1035,1120,1052,1127,1082,1134,1103,1129,1117,1122,1128,1138,1136,1147,1162,1151,1197,1152];
const base = 1152, left = 236, width = 961, classes = 341;

function heightAt(x) {
  let i = 2;
  while (i < envelope.length - 2 && envelope[i] < x) i += 2;
  const x0 = envelope[i - 2], y0 = envelope[i - 1];
  const t = Math.min(1, Math.max(0, (x - x0) / (envelope[i] - x0)));
  return base - (y0 + (envelope[i + 1] - y0) * t);
}

let seed = 11;
const noise = () => (seed = (seed * 16807) % 2147483647) / 2147483647 - .5;

let bars = `M${left} ${base}`;
for (let k = 0; k < classes; k++) {
  const x = left + width * k / classes;
  const h = heightAt(x);
  const y = Math.min(base, Math.max(362, base - h + noise() * Math.min(12, h * .35)));
  bars += `V${y.toFixed(1)}H${(x + width / classes).toFixed(1)}`;
}
document.getElementById("bars").setAttribute("d", bars + `V${base}Z`);

let curve = "";
for (let x = left; x <= left + width; x += 4) {
  const z = (x - 728) / 116;
  curve += `${curve ? "L" : "M"}${x} ${(base - 476 * Math.exp(-z * z / 2)).toFixed(1)}`;
}
document.getElementById("curve").setAttribute("d", curve);

let ticks = "";
for (let n = 0; n <= 18; n++) ticks += `M${n % 5 ? 227 : 223} ${Math.round(1153 - n * 42.1)}H233`;
for (let n = -12; n <= 12; n++) ticks += `M${Math.round(716 + n * 39.9)} 1153V${n % 5 ? 1161 : 1166}`;
document.getElementById("axis-ticks").setAttribute("d", ticks);
```
